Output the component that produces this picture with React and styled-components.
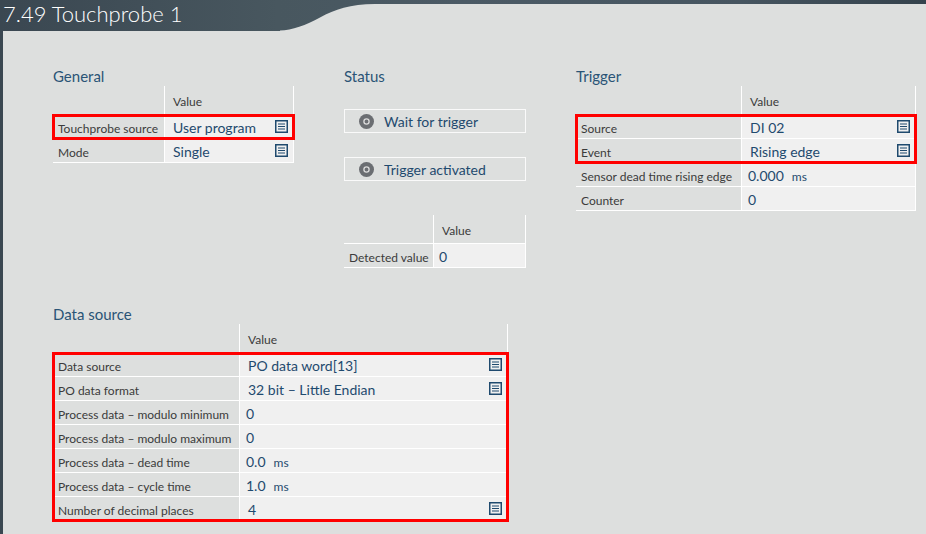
import React from "react";
import styled, { createGlobalStyle } from "styled-components";

const GlobalStyle = createGlobalStyle`
  html, body {
    margin: 0;
    padding: 0;
    width: 100%;
    height: 100%;
    overflow: hidden;
  }
  body {
    font-family: "Segoe UI", Lato, "Noto Sans", sans-serif;
  }
  #root {
    height: 100%;
  }
`;

const Frame = styled.div`
  height: 100%;
  display: flex;
  flex-direction: column;
  padding-left: 3px;
  box-sizing: border-box;
  background: linear-gradient(90deg, #3a4751 0%, #48575f 30%, #4b5a65 50%, #465560 80%, #34424c 100%);
`;

const TitleBar = styled.div`
  display: flex;
  height: 31px;
  flex-shrink: 0;
`;

const Title = styled.h1`
  margin: 0;
  width: 277px;
  font-size: 22px;
  font-weight: 300;
  line-height: 28px;
  color: #ffffff;
  white-space: nowrap;
`;

const Wave = styled.svg`
  display: block;
  width: 95px;
  height: 31px;
  flex-shrink: 0;
`;

const TabFill = styled.div`
  flex: 1;
  margin-top: 4px;
  background: #dddfde;
`;

const Panel = styled.div`
  flex: 1;
  background: #dddfde;
  padding: 35px 0 0 50px;
`;

const TopGrid = styled.div`
  display: grid;
  grid-template-columns: 241px 182px 340px;
  column-gap: 50px;
  align-items: start;
`;

const Section = styled.section`
  display: flex;
  flex-direction: column;
  margin-top: ${(p) => p.$top || 0}px;
`;

const Heading = styled.h2`
  margin: 0;
  height: 20px;
  font-size: 15px;
  font-weight: 400;
  line-height: 20px;
  color: #2a5476;
`;

const Table = styled.div`
  width: ${(p) => p.$width}px;
  --label: ${(p) => p.$label}px;
`;

const Row = styled.div`
  display: grid;
  grid-template-columns: var(--label) 1fr;
  height: ${(p) => p.$h || 23}px;
  border-bottom: 1px solid #ffffff;
`;

const Label = styled.div`
  display: flex;
  align-items: center;
  padding: 4px 0 0 5px;
  font-size: 12px;
  color: #3b3b3b;
  white-space: nowrap;
  overflow: hidden;
`;

const Cell = styled.div`
  display: flex;
  align-items: center;
  gap: 8px;
  padding: 0 5px 0 ${(p) => p.$pad || 8}px;
  border-left: 1px solid #ffffff;
  border-right: 1px solid #ffffff;
  background: ${(p) => (p.$head ? "transparent" : "#f0f0f0")};
  font-size: ${(p) => (p.$head ? 12 : 14)}px;
  color: ${(p) => (p.$head ? "#3b3b3b" : "#1f4a6e")};
  padding-top: ${(p) => (p.$head ? 3 : 1)}px;
  white-space: nowrap;
`;

const Unit = styled.span`
  font-size: 12px;
  padding-top: 2px;
`;

const Grow = styled.span`
  flex: 1;
`;

const IconBox = styled.span`
  display: flex;
  margin-top: -1px;
`;

const Highlight = styled.div`
  outline: 3px solid #ff0000;
  outline-offset: -2px;
`;

const StatusButton = styled.div`
  display: flex;
  align-items: center;
  gap: 10px;
  height: 22px;
  padding-left: 14px;
  margin-top: ${(p) => p.$top}px;
  border: 1px solid #fafafa;
  font-size: 14px;
  color: #1f4a6e;
`;

const ListIcon = () => (
  <svg width="13" height="13" viewBox="0 0 13 13">
    <rect x="0.75" y="0.75" width="11.5" height="11.5" fill="none" stroke="#1f4a6e" strokeWidth="1.5" />
    <path d="M3 4h7M3 6.5h7M3 9h7" stroke="#1f4a6e" strokeWidth="1.2" />
  </svg>
);

const LedIcon = () => (
  <svg width="15" height="15" viewBox="0 0 15 15">
    <circle cx="7.5" cy="7.5" r="7.5" fill="#6b6e72" />
    <circle cx="7.5" cy="7.5" r="2.6" fill="none" stroke="#dcdcdc" strokeWidth="1.3" />
  </svg>
);

const Value = ({ children, unit, list, pad }) => (
  <Cell $pad={pad}>
    <span>{children}</span>
    {unit && <Unit>{unit}</Unit>}
    {list && (
      <>
        <Grow />
        <IconBox>
          <ListIcon />
        </IconBox>
      </>
    )}
  </Cell>
);

const HeadRow = ({ h }) => (
  <Row $h={h}>
    <Label />
    <Cell $head>Value</Cell>
  </Row>
);

const DataRow = ({ label, ...rest }) => (
  <Row>
    <Label>{label}</Label>
    <Value {...rest} />
  </Row>
);

export default function App() {
  return (
    <>
      <GlobalStyle />
      <Frame>
        <TitleBar>
          <Title>7.49 Touchprobe 1</Title>
          <Wave viewBox="0 0 95 31">
            <path d="M0 31 L0 30.5 C12 30.5 26 25 40 17.5 C55 9.5 70 4 95 4 L95 31 Z" fill="#dddfde" />
          </Wave>
          <TabFill />
        </TitleBar>
        <Panel>
          <TopGrid>
            <Section>
              <Heading>General</Heading>
              <Table $width={241} $label={111}>
                <HeadRow h={28} />
                <Highlight>
                  <DataRow label="Touchprobe source" list>
                    User program
                  </DataRow>
                </Highlight>
                <DataRow label="Mode" list>
                  Single
                </DataRow>
              </Table>
            </Section>
            <Section>
              <Heading>Status</Heading>
              <StatusButton $top={23}>
                <LedIcon />
                Wait for trigger
              </StatusButton>
              <StatusButton $top={24}>
                <LedIcon />
                Trigger activated
              </StatusButton>
              <Table $width={182} $label={89} style={{ marginTop: 34 }}>
                <HeadRow h={28} />
                <DataRow label="Detected value" pad={5}>
                  0
                </DataRow>
              </Table>
            </Section>
            <Section>
              <Heading>Trigger</Heading>
              <Table $width={340} $label={165}>
                <HeadRow h={28} />
                <Highlight>
                  <DataRow label="Source" list>
                    DI 02
                  </DataRow>
                  <DataRow label="Event" list>
                    Rising edge
                  </DataRow>
                </Highlight>
                <DataRow label="Sensor dead time rising edge" unit="ms" pad={6}>
                  0.000
                </DataRow>
                <DataRow label="Counter" pad={6}>
                  0
                </DataRow>
              </Table>
            </Section>
          </TopGrid>
          <Section $top={36}>
            <Heading>Data source</Heading>
            <Table $width={455} $label={186}>
              <HeadRow h={28} />
              <Highlight>
                <DataRow label="Data source" list>
                  PO data word[13]
                </DataRow>
                <DataRow label="PO data format" list>
                  32 bit – Little Endian
                </DataRow>
                <DataRow label="Process data – modulo minimum" pad={6}>
                  0
                </DataRow>
                <DataRow label="Process data – modulo maximum" pad={6}>
                  0
                </DataRow>
                <DataRow label="Process data – dead time" unit="ms" pad={6}>
                  0.0
                </DataRow>
                <DataRow label="Process data – cycle time" unit="ms" pad={6}>
                  1.0
                </DataRow>
                <DataRow label="Number of decimal places" list>
                  4
                </DataRow>
              </Highlight>
            </Table>
          </Section>
        </Panel>
      </Frame>
    </>
  );
}
